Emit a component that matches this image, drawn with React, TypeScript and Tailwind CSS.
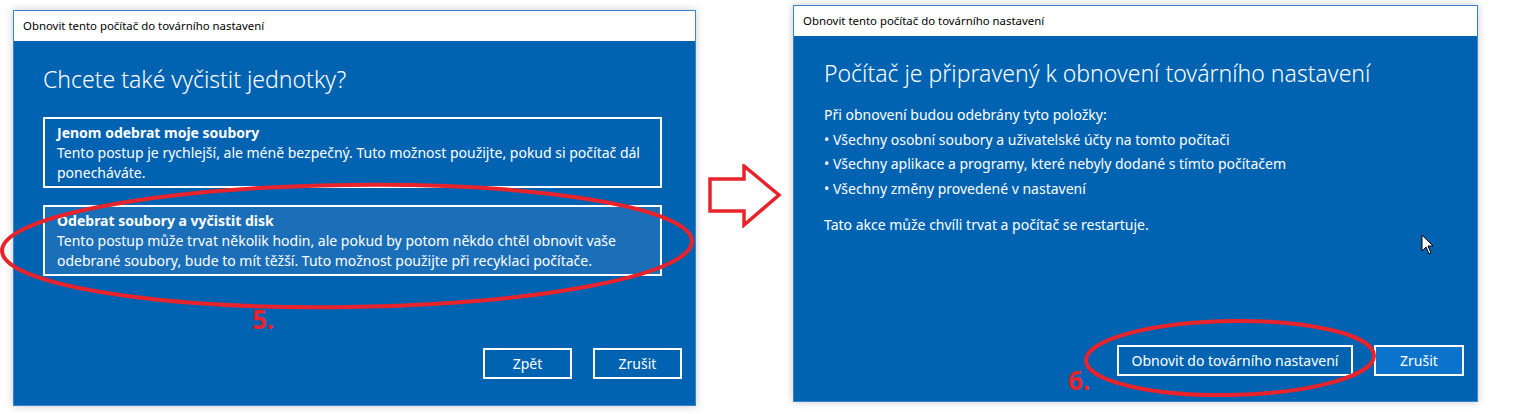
import React from 'react';

const font = { fontFamily: '"Noto Sans", "Open Sans", sans-serif' };

function TitleBar({ title }: { title: string }) {
  return (
    <div className="h-[30px] bg-white flex items-center pl-[9px] text-[11.4px] text-black">
      {title}
    </div>
  );
}

function OptionBox({ title, text, selected }: { title: string; text: string; selected?: boolean }) {
  return (
    <div
      className={`border-2 border-white h-[71px] pl-[12px] pr-[10px] pt-[4px] text-[14px] leading-[20px] text-white ${
        selected ? 'bg-[#1b6fb8]' : 'bg-[#0063b1]'
      }`}
    >
      <div className="font-bold">{title}</div>
      <div>{text}</div>
    </div>
  );
}

function DialogButton({ label, width, filled }: { label: string; width: string; filled?: boolean }) {
  return (
    <button
      className={`${width} h-[31px] border-2 border-white text-white text-[14px] flex items-center justify-center ${
        filled ? 'bg-[#0a73cc]' : 'bg-transparent'
      }`}
    >
      {label}
    </button>
  );
}

export default function App() {
  const items = [
    'Všechny osobní soubory a uživatelské účty na tomto počítači',
    'Všechny aplikace a programy, které nebyly dodané s tímto počítačem',
    'Všechny změny provedené v nastavení',
  ];

  return (
    <div className="relative w-[1515px] h-[414px] bg-white overflow-hidden flex items-start" style={font}>
      {/* Step 5 dialog */}
      <div className="ml-[13px] mt-[10px] w-[683px] h-[396px] flex flex-col border border-[#3a84c9] shadow-[0_0_8px_rgba(0,0,0,0.22)]">
        <TitleBar title="Obnovit tento počítač do továrního nastavení" />
        <div className="flex-1 bg-[#0063b1] flex flex-col pl-[29px] pr-[13px] pt-[22px] pb-[26px]">
          <h1 className="text-[23px] font-light leading-[32px] text-white">Chcete také vyčistit jednotky?</h1>
          <div className="mt-[22px] mr-[20px] flex flex-col gap-[17px]">
            <OptionBox
              title="Jenom odebrat moje soubory"
              text="Tento postup je rychlejší, ale méně bezpečný. Tuto možnost použijte, pokud si počítač dál ponecháváte."
            />
            <OptionBox
              selected
              title="Odebrat soubory a vyčistit disk"
              text="Tento postup může trvat několik hodin, ale pokud by potom někdo chtěl obnovit vaše odebrané soubory, bude to mít těžší. Tuto možnost použijte při recyklaci počítače."
            />
          </div>
          <div className="mt-auto flex justify-end gap-[21px]">
            <DialogButton label="Zpět" width="w-[89px]" />
            <DialogButton label="Zrušit" width="w-[89px]" />
          </div>
        </div>
      </div>

      {/* Arrow */}
      <div className="w-[97px] h-[414px] flex items-start justify-center pt-[164px]">
        <svg width="74" height="64" viewBox="0 0 74 64">
          <polygon
            points="2,15 36,15 36,2 71,31 36,61 36,47 2,47"
            fill="white"
            stroke="#e8232b"
            strokeWidth="3.5"
            strokeLinejoin="miter"
          />
        </svg>
      </div>

      {/* Step 6 dialog */}
      <div className="mt-[5px] w-[685px] h-[397px] flex flex-col border border-[#3a84c9] shadow-[0_0_8px_rgba(0,0,0,0.22)]">
        <TitleBar title="Obnovit tento počítač do továrního nastavení" />
        <div className="flex-1 bg-[#0063b1] flex flex-col pl-[30px] pr-[13px] pt-[21px] pb-[25px] text-white">
          <h1 className="text-[23px] font-light leading-[32px]">Počítač je připravený k obnovení továrního nastavení</h1>
          <div className="mt-[14px] text-[14px] leading-[24.5px]">
            <div>Při obnovení budou odebrány tyto položky:</div>
            {items.map((item) => (
              <div key={item}>• {item}</div>
            ))}
            <div className="mt-[12px]">Tato akce může chvíli trvat a počítač se restartuje.</div>
          </div>
          <div className="mt-auto flex justify-end gap-[21px]">
            <DialogButton label="Obnovit do továrního nastavení" width="w-[236px]" />
            <DialogButton label="Zrušit" width="w-[90px]" filled />
          </div>
        </div>
      </div>

      {/* Annotations */}
      <svg className="absolute left-0 top-0 pointer-events-none" width="1515" height="414" viewBox="0 0 1515 414">
        <ellipse cx="347" cy="246" rx="345" ry="61" fill="none" stroke="#e8232b" strokeWidth="4" transform="rotate(-0.8 347 246)" />
        <ellipse cx="1230" cy="358" rx="144" ry="37" fill="none" stroke="#e8232b" strokeWidth="4" transform="rotate(-1 1230 358)" />
        {/* mouse cursor */}
        <path d="M1422 235 L1422 251 L1426 247 L1429 254 L1431 253 L1428 246 L1433 246 Z" fill="white" stroke="black" strokeWidth="1" />
      </svg>
      <span className="absolute left-[252px] top-[303px] text-[26px] font-bold leading-[32px] text-[#e8232b]">5.</span>
      <span className="absolute left-[1068px] top-[364px] text-[26px] font-bold leading-[32px] text-[#e8232b]">6.</span>
    </div>
  );
}
